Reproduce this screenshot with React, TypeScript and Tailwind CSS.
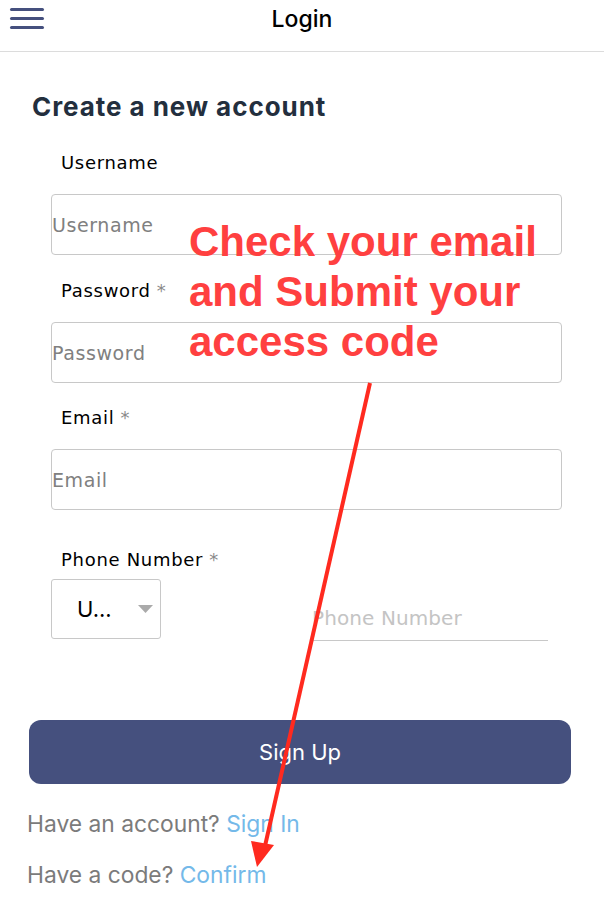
const labelCls = "ml-[10px] text-[18px] leading-[24px] text-black font-['DejaVu_Sans',sans-serif] tracking-[0.7px]";
const inputCls =
  "block w-[511px] h-[61px] border border-[#c8c8c8] rounded-[4px] bg-white px-0 text-[19px] tracking-[0.6px] font-['DejaVu_Sans',sans-serif] placeholder:text-[#808080] outline-none";

function Label({ text, required }: { text: string; required?: boolean }) {
  return (
    <div className={labelCls}>
      {text}
      {required && <span className="ml-[6px] text-[#8a8a8a]">*</span>}
    </div>
  );
}

function Annotation() {
  return (
    <div className="pointer-events-none absolute inset-0">
      <div className="absolute left-[189px] top-[217px] text-[42px] leading-[50px] font-bold text-[#ff4040] font-['Liberation_Sans',Arial,sans-serif]">
        Check your email
        <br />
        and Submit your
        <br />
        access code
      </div>
      <svg className="absolute left-0 top-0" width="604" height="904" viewBox="0 0 604 904">
        <line x1="370" y1="383" x2="265" y2="846" stroke="#ff2a1f" strokeWidth="4" />
        <polygon points="257,867 251,841 274,845" fill="#ff2a1f" />
      </svg>
    </div>
  );
}

export default function App() {
  return (
    <div className="relative w-[604px] h-[904px] overflow-hidden bg-white">
      <header className="relative flex h-[52px] items-center justify-center border-b border-[#dcdcdc]">
        <button className="absolute left-[10px] top-[8px] flex flex-col gap-[6px]">
          <span className="block h-[3px] w-[34px] rounded-full bg-[#45507e]" />
          <span className="block h-[3px] w-[34px] rounded-full bg-[#45507e]" />
          <span className="block h-[3px] w-[34px] rounded-full bg-[#45507e]" />
        </button>
        <h1 className="-mt-[12px] text-[23px] font-medium text-black font-['Inter',sans-serif]">Login</h1>
      </header>

      <h2 className="ml-[32px] mt-[38px] text-[26px] leading-[34px] font-bold text-[#232f3e] font-['Inter',sans-serif] tracking-[0.95px]">
        Create a new account
      </h2>

      <form className="ml-[51px] w-[511px]">
        <div className="mt-[27px]">
          <Label text="Username" />
          <input className={`mt-[19px] ${inputCls}`} placeholder="Username" />
        </div>
        <div className="mt-[24px]">
          <Label text="Password" required />
          <input type="password" className={`mt-[19px] ${inputCls}`} placeholder="Password" />
        </div>
        <div className="mt-[23px]">
          <Label text="Email" required />
          <input className={`mt-[19px] ${inputCls}`} placeholder="Email" />
        </div>
        <div className="mt-[38px]">
          <Label text="Phone Number" required />
          <div className="mt-[7px] flex items-start">
            <div className="relative flex h-[60px] w-[110px] items-center border border-[#c8c8c8] rounded-[3px] pl-[25px] text-[22px] text-black font-['Inter',sans-serif]">
              U...
              <svg className="absolute left-[86px] top-[25px]" width="15" height="8" viewBox="0 0 15 8">
                <polygon points="0,0 15,0 7.5,8" fill="#aaaaaa" />
              </svg>
            </div>
            <input
              className="ml-[151px] mt-[16px] h-[46px] w-[236px] border-b border-[#c8c8c8] px-0 text-[20px] tracking-[0.1px] font-['DejaVu_Sans',sans-serif] placeholder:text-[#c4c4c4] outline-none"
              placeholder="Phone Number"
            />
          </div>
        </div>
      </form>

      <button className="ml-[29px] mt-[79px] flex h-[64px] w-[542px] items-center justify-center rounded-[12px] bg-[#45507e] text-[22px] text-white font-['Inter',sans-serif]">
        Sign Up
      </button>

      <p className="ml-[27px] mt-[25px] text-[22.8px] leading-[30px] text-[#7b7b7b] font-['Inter',sans-serif]">
        Have an account? <span className="text-[#74b9e9]">Sign In</span>
      </p>
      <p className="ml-[27px] mt-[21px] text-[22.8px] leading-[30px] text-[#7b7b7b] font-['Inter',sans-serif]">
        Have a code? <span className="text-[#74b9e9]">Confirm</span>
      </p>

      <Annotation />
    </div>
  );
}
